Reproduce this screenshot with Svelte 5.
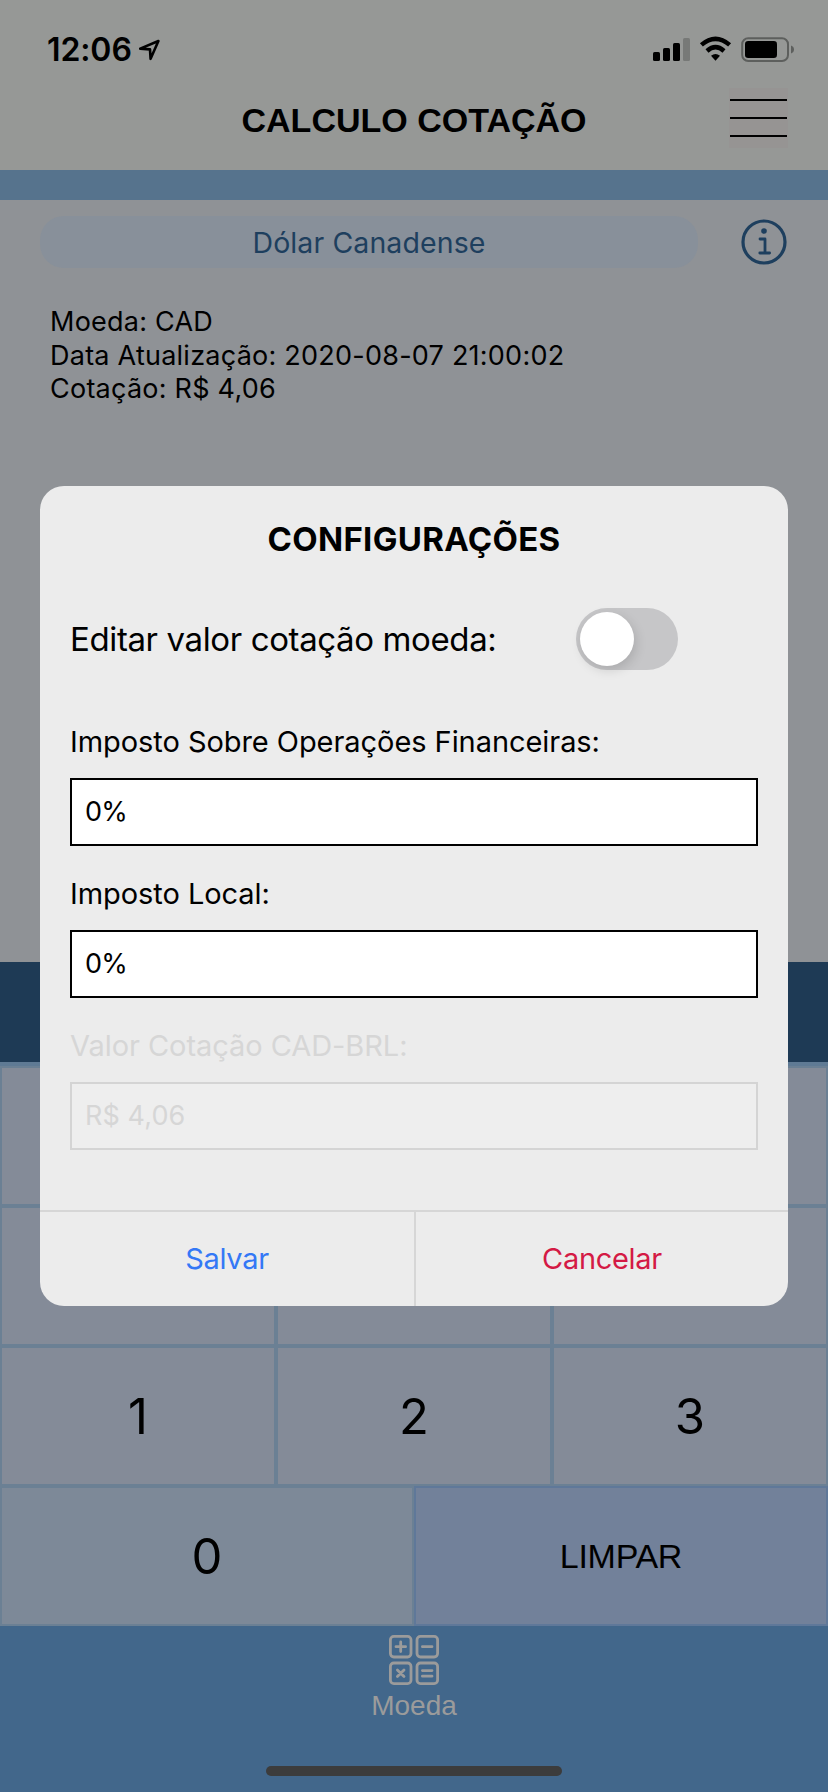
<script>
  const info = [
    "Moeda: CAD",
    "Data Atualização: 2020-08-07 21:00:02",
    "Cotação: R$ 4,06",
  ];
  const keys = [7, 8, 9, 4, 5, 6, 1, 2, 3];

  let editRate = false;
  let iof = "0%";
  let localTax = "0%";
  let rate = "R$ 4,06";
</script>

<div class="screen">
  <header>
    <div class="status">
      <span class="time">12:06</span>
      <svg class="location" width="22" height="22" viewBox="0 0 22 22">
        <path d="M1.2 9.6 L19.4 2 L11.6 19.8 L11 10.4 Z" />
      </svg>
      <svg class="indicators" width="144" height="28" viewBox="0 0 144 28">
        <rect x="0" y="16" width="7" height="9" rx="1.6" />
        <rect x="10" y="12" width="7" height="13" rx="1.6" />
        <rect x="20" y="7" width="7" height="18" rx="1.6" />
        <rect x="30" y="2" width="7" height="23" rx="1.6" fill="#777977" />
        <g fill="none" stroke="#000" stroke-width="4.5">
          <path d="M48.4 8.9 Q62.5 -3.3 76.6 8.9" />
          <path d="M54 15 Q62.5 7.4 71 15" />
        </g>
        <path d="M58 19.8 Q62.5 16.2 67 19.8 L62.5 24.8 Z" />
        <rect x="89.2" y="2.2" width="45.8" height="22.8" rx="6" fill="none" stroke="#5d5f5d" stroke-width="2" />
        <rect x="92" y="5" width="32" height="17" rx="3.2" />
        <path d="M138 9.5 Q141 10.7 141 13.5 Q141 16.3 138 17.5 Z" fill="#5d5f5d" />
      </svg>
    </div>
    <div class="navbar">
      <h1>CALCULO COTAÇÃO</h1>
      <button class="menu" aria-label="Menu">
        <i></i><i></i><i></i>
      </button>
    </div>
  </header>
  <div class="stripe"></div>

  <main>
    <div class="currency">
      <button class="pill"><span>Dólar Canadense</span></button>
      <svg width="46" height="46" viewBox="0 0 46 46">
        <circle cx="23" cy="23" r="21" fill="none" stroke="#1e3f5e" stroke-width="3.2" />
        <circle cx="23" cy="12" r="2.8" fill="#1e3f5e" />
        <path d="M19 20 H24 V34 M18.8 34 H28.6" fill="none" stroke="#1e3f5e" stroke-width="2.8" stroke-linecap="round" stroke-linejoin="round" />
      </svg>
    </div>
    <div class="info">
      {#each info as line}
        <p>{line}</p>
      {/each}
    </div>
  </main>

  <div class="total"></div>
  <div class="keypad">
    {#each keys as key}
      <button>{key}</button>
    {/each}
    <button class="zero">0</button>
    <button class="clear"><span>LIMPAR</span></button>
  </div>

  <footer>
    <svg width="50" height="50" viewBox="0 0 50 50" fill="none" stroke="#9b9b9b" stroke-width="2.8" stroke-linecap="round">
      <rect x="1.4" y="1.4" width="20.6" height="20.6" rx="3.4" />
      <rect x="28" y="1.4" width="20.6" height="20.6" rx="3.4" />
      <rect x="1.4" y="28" width="20.6" height="20.6" rx="3.4" />
      <rect x="28" y="28" width="20.6" height="20.6" rx="3.4" />
      <path d="M7 11.7 H16.6 M11.7 7 V16.6 M33.4 11.7 H43" />
      <path d="M8.4 35 L15 41.6 M15 35 L8.4 41.6 M33.4 35.6 H43 M33.4 41.2 H43" />
    </svg>
    <span>Moeda</span>
    <div class="home"></div>
  </footer>

  <section class="modal">
    <h2>CONFIGURAÇÕES</h2>
    <div class="toggle-row">
      <span>Editar valor cotação moeda:</span>
      <button class="switch" class:on={editRate} aria-label="Editar" on:click={() => (editRate = !editRate)}>
        <i></i>
      </button>
    </div>
    <div class="field">
      <label for="iof">Imposto Sobre Operações Financeiras:</label>
      <input id="iof" bind:value={iof} />
    </div>
    <div class="field">
      <label for="local">Imposto Local:</label>
      <input id="local" bind:value={localTax} />
    </div>
    <div class="field" class:disabled={!editRate}>
      <label for="rate">Valor Cotação CAD-BRL:</label>
      <input id="rate" bind:value={rate} disabled={!editRate} />
    </div>
    <div class="actions">
      <button class="save">Salvar</button>
      <button class="cancel">Cancelar</button>
    </div>
  </section>
</div>

<style>
  :global(body) {
    margin: 0;
  }
  .screen {
    position: relative;
    display: flex;
    flex-direction: column;
    width: 828px;
    height: 1792px;
    overflow: hidden;
    font-family: Inter, "Liberation Sans", sans-serif;
    color: #000;
  }
  button {
    border: none;
    margin: 0;
    padding: 0;
    background: none;
    font: inherit;
    letter-spacing: inherit;
    color: inherit;
  }
  h1, h2, p {
    margin: 0;
  }
  header {
    height: 170px;
    background: #969896;
  }
  .status {
    display: flex;
    height: 88px;
    box-sizing: border-box;
    padding: 29px 31px 0 47px;
  }
  .time {
    width: 86px;
    font-size: 32px;
    line-height: 42px;
    font-weight: 600;
    letter-spacing: -0.1px;
    white-space: nowrap;
  }
  .location {
    margin: 10px 0 0 6px;
    fill: none;
    stroke: #000;
    stroke-width: 2.6;
    stroke-linejoin: round;
  }
  .indicators {
    margin: 7px 0 0 auto;
  }
  .navbar {
    display: grid;
    grid-template-columns: 99px 1fr 99px;
    height: 60px;
    align-items: center;
  }
  h1 {
    grid-column: 2;
    padding-top: 4px;
    text-align: center;
    font: bold 34px/40px "Liberation Sans", Arial, sans-serif;
  }
  .menu {
    display: flex;
    flex-direction: column;
    justify-content: space-between;
    box-sizing: border-box;
    width: 59px;
    height: 60px;
    padding: 11px 1px;
    background: #969493;
  }
  .menu i {
    height: 2px;
    background: #000;
  }
  .stripe {
    height: 30px;
    background: #56738d;
  }
  main {
    height: 762px;
    background: #8f9296;
  }
  .currency {
    display: flex;
    align-items: center;
    justify-content: space-between;
    padding: 16px 41px 0 40px;
  }
  .pill {
    width: 658px;
    height: 52px;
    border-radius: 24px;
    background: #88909a;
    color: #1e3f5e;
    font-size: 28.5px;
    letter-spacing: 0.1px;
  }
  .info {
    padding: 37px 50px;
    font-size: 27px;
    line-height: 33.6px;
    letter-spacing: 0.24px;
  }
  .total {
    height: 100px;
    background: #1e3a55;
  }
  .keypad {
    display: grid;
    grid-template-columns: repeat(6, 138px);
    grid-auto-rows: 140px;
    padding-top: 4px;
    background: #5f7a94;
    font-size: 49px;
  }
  .keypad button {
    grid-column: span 2;
    border: 2px solid #6b8094;
    background: #848b98;
  }
  .keypad .zero {
    grid-column: span 3;
    background: #7d8998;
  }
  .keypad .clear {
    grid-column: span 3;
    border-color: #5f7899;
    background: #72819a;
    font: 34px "Liberation Sans", Arial, sans-serif;
    letter-spacing: -0.3px;
  }
  footer {
    display: flex;
    flex-direction: column;
    align-items: center;
    flex: 1;
    padding-top: 9px;
    background: #42678b;
    color: #9b9b9b;
    font: 28px/34px "Liberation Sans", Arial, sans-serif;
  }
  footer span {
    margin-top: 4px;
  }
  .home {
    width: 296px;
    height: 10px;
    margin-top: 43px;
    border-radius: 5px;
    background: #3c3c3c;
  }
  .modal {
    position: absolute;
    top: 486px;
    left: 40px;
    display: flex;
    flex-direction: column;
    box-sizing: border-box;
    width: 748px;
    height: 820px;
    padding: 33px 30px 0;
    overflow: hidden;
    border-radius: 24px;
    background: #ececec;
  }
  h2 {
    text-align: center;
    font-size: 33px;
    line-height: 40px;
    font-weight: 700;
    letter-spacing: 0.3px;
  }
  .toggle-row {
    display: flex;
    align-items: center;
    justify-content: space-between;
    height: 62px;
    margin: 49px 80px 0 0;
    font-size: 33px;
    letter-spacing: -0.38px;
  }
  .switch {
    width: 102px;
    height: 62px;
    padding: 4px;
    border-radius: 31px;
    background: #c6c6c8;
  }
  .switch i {
    display: block;
    width: 54px;
    height: 54px;
    border-radius: 50%;
    background: #fff;
    box-shadow: 2px 4px 12px rgba(0, 0, 0, 0.14);
  }
  .switch.on {
    background: #34c759;
  }
  .switch.on i {
    margin-left: auto;
  }
  .field {
    display: flex;
    flex-direction: column;
    height: 152px;
  }
  .toggle-row + .field {
    margin-top: 54px;
  }
  .field label {
    height: 54px;
    font-size: 29px;
    line-height: 36px;
    letter-spacing: -0.06px;
  }
  .field input {
    height: 68px;
    box-sizing: border-box;
    padding: 0 12px 2px 13px;
    border: 2px solid #000;
    border-radius: 0;
    background: #fff;
    color: #000;
    font: 27px Inter, "Liberation Sans", sans-serif;
    letter-spacing: -0.8px;
  }
  .disabled label {
    color: #d6d6d6;
  }
  .disabled input {
    border-color: #d4d4d4;
    background: #eee;
    color: #d6d6d6;
    letter-spacing: 0.1px;
  }
  .actions {
    display: flex;
    height: 96px;
    box-sizing: border-box;
    margin: auto -30px 0;
    border-top: 2px solid #d6d6d6;
    font-size: 29px;
    letter-spacing: -0.3px;
  }
  .actions button {
    flex: 1;
    padding-bottom: 2px;
  }
  .actions .save {
    flex: none;
    width: 376px;
    border-right: 2px solid #d6d6d6;
    color: #3478f6;
  }
  .actions .cancel {
    color: #d41a45;
  }
</style>
